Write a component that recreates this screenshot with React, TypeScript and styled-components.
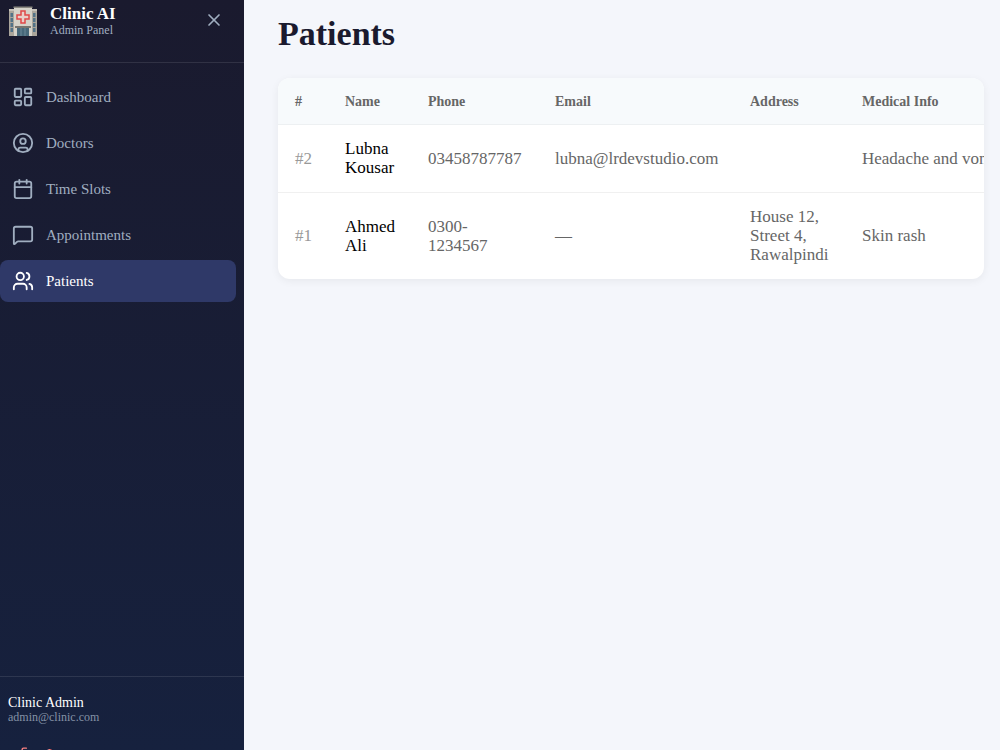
import React from "react";
import styled, { createGlobalStyle } from "styled-components";
import {
  Calendar,
  CircleUser,
  LayoutDashboard,
  LogOut,
  MessageSquare,
  Users,
  X,
  type LucideIcon,
} from "lucide-react";

const GlobalStyle = createGlobalStyle`
  * { box-sizing: border-box; }
  body {
    margin: 0;
    background: #f4f6fb;
    font-family: "Liberation Serif", "Times New Roman", serif;
    color: #000;
  }
  button { font-family: inherit; cursor: pointer; }
`;

const Shell = styled.div`
  display: flex;
  height: 100vh;
  overflow: hidden;
`;

const Sidebar = styled.aside`
  flex: 0 0 244px;
  display: flex;
  flex-direction: column;
  overflow: hidden;
  background: linear-gradient(180deg, #1a1a2e 0%, #16213e 100%);
  color: #fff;
`;

const Brand = styled.header`
  display: flex;
  align-items: flex-start;
  gap: 12px;
  height: 63px;
  padding: 4px 20px 0 8px;
  border-bottom: 1px solid rgba(255, 255, 255, 0.1);
`;

const BrandText = styled.div`
  flex: 1;
`;

const BrandName = styled.div`
  font-size: 17px;
  line-height: 19px;
  font-weight: 700;
`;

const BrandSub = styled.div`
  font-size: 12px;
  line-height: 15px;
  color: #a0aec0;
`;

const CloseButton = styled.button`
  display: flex;
  padding: 6px 0;
  border: 0;
  background: none;
  color: #a0aec0;
`;

const Nav = styled.nav`
  flex: 1;
  display: flex;
  flex-direction: column;
  gap: 4px;
  padding: 13px 8px 0 0;
`;

const NavLink = styled.a<{ $active: boolean }>`
  display: flex;
  align-items: center;
  gap: 12px;
  height: 42px;
  padding: 0 12px;
  border-radius: 8px;
  font-size: 15px;
  text-decoration: none;
  color: ${(p) => (p.$active ? "#fff" : "#a0aec0")};
  background: ${(p) => (p.$active ? "#2f3968" : "transparent")};
`;

const Account = styled.footer`
  height: 74px;
  padding: 17px 8px 0;
  border-top: 1px solid rgba(255, 255, 255, 0.1);
`;

const AccountName = styled.div`
  font-size: 14px;
  line-height: 17px;
`;

const AccountMail = styled.div`
  font-size: 12px;
  line-height: 13px;
  color: #8492a6;
`;

const LogoutButton = styled.button`
  display: flex;
  align-items: center;
  gap: 10px;
  margin-top: 13px;
  padding: 9px 12px;
  border: 0;
  background: none;
  color: #fc8181;
  font-size: 14px;
`;

const Main = styled.main`
  flex: 1;
  min-width: 0;
  padding: 14px 16px 0 34px;
`;

const Title = styled.h1`
  margin: 0 0 25px;
  font-size: 34px;
  line-height: 39px;
  color: #1a1a2e;
`;

const Card = styled.section`
  overflow: hidden;
  border-radius: 12px;
  background: #fff;
  box-shadow: 0 2px 8px rgba(0, 0, 0, 0.06);
`;

const Table = styled.table`
  width: 100%;
  min-width: 770px;
  table-layout: fixed;
  border-collapse: separate;
  border-spacing: 0;
`;

const HeadCell = styled.th<{ $width?: number }>`
  width: ${(p) => (p.$width ? `${p.$width}px` : "auto")};
  height: 47px;
  padding: 1px 17px 0;
  border-bottom: 1px solid #edf0f2;
  background: #f7fafc;
  font-size: 14px;
  line-height: 16px;
  text-align: left;
  color: #666;
`;

const Row = styled.tr`
  &:not(:last-child) td {
    border-bottom: 1px solid #f0f0f0;
  }
`;

const Cell = styled.td<{ $color?: string; $nowrap?: boolean }>`
  padding: 14px 17px 15px;
  font-size: 17px;
  line-height: 19px;
  color: ${(p) => p.$color ?? "#666"};
  white-space: ${(p) => (p.$nowrap ? "nowrap" : "normal")};
`;

function HospitalLogo() {
  return (
    <svg width="30" height="32" viewBox="0 -2 30 32" aria-hidden="true">
      <rect x="1" y="4" width="28" height="26" fill="#aaa59b" />
      <rect x="1" y="3" width="28" height="2" fill="#c5c1b8" />
      <rect x="6" y="1" width="18" height="29" fill="#d5d2c9" />
      <rect x="5.500" y="0.500" width="19" height="1.500" fill="#898780" />
      <g fill="#527388">
        {[7, 12, 17, 22].map((y) => (
          <React.Fragment key={y}>
            <rect x="2.500" y={y} width="2.500" height="4" />
            <rect x="25" y={y} width="2.500" height="4" />
          </React.Fragment>
        ))}
      </g>
      <rect x="7" y="20" width="16" height="2" fill="#77756f" />
      <rect x="9" y="22" width="12" height="8" fill="#47687a" />
      <path d="M13 22v8M17 22v8" stroke="#7d99a6" strokeWidth="0.700" />
      <path
        d="M13 5h4v4h4v4h-4v4h-4v-4H9V9h4z"
        fill="#e9cfc9"
        stroke="#e04848"
        strokeWidth="1.500"
      />
    </svg>
  );
}

const links: { label: string; icon: LucideIcon }[] = [
  { label: "Dashboard", icon: LayoutDashboard },
  { label: "Doctors", icon: CircleUser },
  { label: "Time Slots", icon: Calendar },
  { label: "Appointments", icon: MessageSquare },
  { label: "Patients", icon: Users },
];

const columns: { label: string; width?: number }[] = [
  { label: "#", width: 50 },
  { label: "Name", width: 83 },
  { label: "Phone", width: 127 },
  { label: "Email", width: 195 },
  { label: "Address", width: 112 },
  { label: "Medical Info" },
];

const patients = [
  {
    id: 2,
    name: "Lubna Kousar",
    phone: "03458787787",
    email: "lubna@lrdevstudio.com",
    address: "",
    info: "Headache and vomiting",
  },
  {
    id: 1,
    name: "Ahmed Ali",
    phone: "0300-1234567",
    email: "—",
    address: "House 12, Street 4, Rawalpindi",
    info: "Skin rash",
  },
];

export default function App() {
  return (
    <>
      <GlobalStyle />
      <Shell>
        <Sidebar>
          <Brand>
            <HospitalLogo />
            <BrandText>
              <BrandName>Clinic AI</BrandName>
              <BrandSub>Admin Panel</BrandSub>
            </BrandText>
            <CloseButton type="button" aria-label="Close menu">
              <X size={20} />
            </CloseButton>
          </Brand>
          <Nav>
            {links.map(({ label, icon: Icon }) => (
              <NavLink
                key={label}
                href="#"
                $active={label === "Patients"}
                aria-current={label === "Patients" ? "page" : undefined}
              >
                <Icon size={22} strokeWidth={2} />
                {label}
              </NavLink>
            ))}
          </Nav>
          <Account>
            <AccountName>Clinic Admin</AccountName>
            <AccountMail>admin@clinic.com</AccountMail>
            <LogoutButton type="button">
              <LogOut size={17} />
              Logout
            </LogoutButton>
          </Account>
        </Sidebar>
        <Main>
          <Title>Patients</Title>
          <Card>
            <Table>
              <thead>
                <tr>
                  {columns.map((c) => (
                    <HeadCell key={c.label} scope="col" $width={c.width}>
                      {c.label}
                    </HeadCell>
                  ))}
                </tr>
              </thead>
              <tbody>
                {patients.map((p) => (
                  <Row key={p.id}>
                    <Cell $color="#999">#{p.id}</Cell>
                    <Cell $color="#000">{p.name}</Cell>
                    <Cell>{p.phone}</Cell>
                    <Cell>{p.email}</Cell>
                    <Cell>{p.address}</Cell>
                    <Cell $nowrap>{p.info}</Cell>
                  </Row>
                ))}
              </tbody>
            </Table>
          </Card>
        </Main>
      </Shell>
    </>
  );
}
